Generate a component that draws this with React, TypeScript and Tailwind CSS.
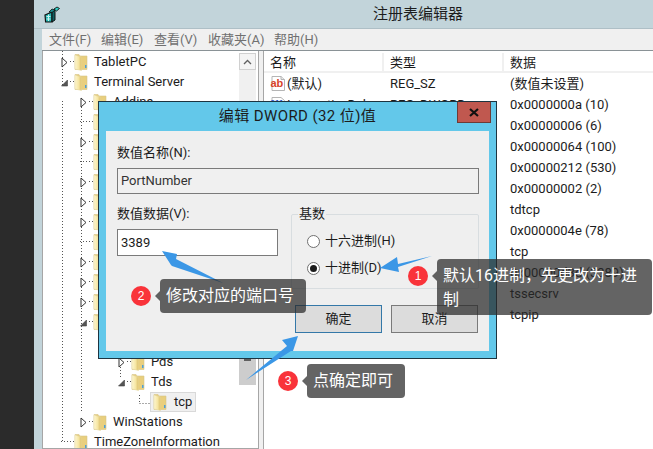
const ui = "font-['Roboto','Noto_Sans_CJK_SC',sans-serif]";

const treeRows: { label: string; x: number; arrow?: "open" | "closed"; selected?: boolean }[] = [
  { label: "TabletPC", x: 61, arrow: "closed" },
  { label: "Terminal Server", x: 61, arrow: "open" },
  { label: "Addins", x: 80, arrow: "closed" },
  { label: "ConnectionHandler", x: 80 },
  { label: "DefaultUserConfiguration", x: 80, arrow: "closed" },
  { label: "Dwm", x: 80 },
  { label: "KeyboardType Mapping", x: 80, arrow: "closed" },
  { label: "RCM", x: 80, arrow: "closed" },
  { label: "SessionArbitrationHelper", x: 80, arrow: "closed" },
  { label: "SysProcs", x: 80 },
  { label: "TerminalTypes", x: 80, arrow: "closed" },
  { label: "Utilities", x: 80, arrow: "closed" },
  { label: "VIDEO", x: 80, arrow: "closed" },
  { label: "Wds", x: 80, arrow: "open" },
  { label: "rdpwd", x: 99, arrow: "open" },
  { label: "Pds", x: 118, arrow: "closed" },
  { label: "Tds", x: 118, arrow: "open" },
  { label: "tcp", x: 137, selected: true },
  { label: "WinStations", x: 80, arrow: "closed" },
  { label: "TimeZoneInformation", x: 61 },
];

const values: [string, string, string][] = [
  ["(默认)", "REG_SZ", "(数值未设置)"],
  ["InteractiveDelay", "REG_DWORD", "0x0000000a (10)"],
  ["LanAdapter", "REG_DWORD", "0x00000006 (6)"],
  ["MaxInstanceCount", "REG_DWORD", "0x00000064 (100)"],
  ["OutBufLength", "REG_DWORD", "0x00000212 (530)"],
  ["OutBufCount", "REG_DWORD", "0x00000002 (2)"],
  ["PdClass", "REG_SZ", "tdtcp"],
  ["PdFlag", "REG_DWORD", "0x0000004e (78)"],
  ["PdName", "REG_SZ", "tcp"],
  ["PortNumber", "REG_DWORD", "0x00000d3d (3389)"],
  ["ServiceName", "REG_SZ", "tssecsrv"],
  ["Transport", "REG_SZ", "tcpip"],
];

function FolderIcon() {
  return (
    <svg width="14" height="18" viewBox="0 0 14 18" className="shrink-0">
      <defs>
        <linearGradient id="folderFill" x1="0" x2="1" y1="0" y2="0">
          <stop offset="0" stopColor="#fdf6cf" />
          <stop offset="0.55" stopColor="#f6e6a4" />
          <stop offset="1" stopColor="#dcc06a" />
        </linearGradient>
      </defs>
      <path d="M1 1.5h4l1 1.5h7v13.5H1z" fill="#e6cd7c" stroke="#d8c68c" strokeWidth="0.6" />
      <path d="M1 2l6.5 2.2v13.3L1 16z" fill="url(#folderFill)" stroke="#e4d9a6" strokeWidth="0.5" />
      <path d="M7.5 4.2h4.5v12H7.5z" fill="#e9cf7e" />
      <rect x="11" y="12" width="1.5" height="3" fill="#4f9fd8" />
    </svg>
  );
}

function AppIcon() {
  return (
    <svg width="18" height="18" viewBox="0 0 18 18" className="shrink-0">
      <path d="M2 9l7-3v10H2.6z" fill="#25b7b4" stroke="#111" strokeWidth="1.2" />
      <path d="M3.5 10.5h4M3.5 13h4M5.5 8.5v6.5" stroke="#c8f4ee" strokeWidth="1" />
      <path d="M9 6l3-2v10l-3 2z" fill="#0f5f62" stroke="#111" strokeWidth="1" />
      <path d="M6 6l3-3 3 1-3 2.5z" fill="#1a8f90" stroke="#111" strokeWidth="0.8" />
      <path d="M11 3l3-2 2.5 1.5-3 2.5z" fill="#2ed0c6" stroke="#111" strokeWidth="0.9" />
    </svg>
  );
}

function AbIcon() {
  return (
    <svg width="16" height="17" viewBox="0 0 16 17" className="shrink-0">
      <path d="M2 1.5h9l3.5 3v11H2z" fill="#fff" stroke="#b5b5b5" />
      <path d="M11 1.5v3h3.5" fill="#e8e8e8" stroke="#b5b5b5" />
      <text x="0.5" y="11.5" fontSize="11" fontWeight="700" fill="#d8432a" fontFamily="Liberation Sans, sans-serif">
        ab
      </text>
    </svg>
  );
}

function BinIcon() {
  return (
    <svg width="16" height="17" viewBox="0 0 16 17" className="shrink-0">
      <path d="M2 1.5h9l3.5 3v11H2z" fill="#fff" stroke="#b5b5b5" />
      <text x="0.5" y="9" fontSize="8" fontWeight="700" fill="#2f56c8" fontFamily="Liberation Sans, sans-serif">
        011
      </text>
    </svg>
  );
}

function TreeArrow({ kind }: { kind: "open" | "closed" }) {
  return kind === "open" ? (
    <svg width="7" height="9" viewBox="0 0 7 9">
      <path d="M6.5 2v6H.5z" fill="#555" stroke="#444" strokeWidth="0.6" />
    </svg>
  ) : (
    <svg width="7" height="11" viewBox="0 0 7 11">
      <path d="M1 1l5 4.5L1 10z" fill="#fff" stroke="#333" />
    </svg>
  );
}

// dotted connector lines of the tree, coordinates relative to the tree panel
function TreeGuides() {
  const dots = "1 2";
  const v: [number, number, number][] = [
    [19, 0, 36],
    [19, 50, 392],
    [38, 50, 362],
    [77, 316, 326],
    [96, 344, 352],
  ];
  const h: [number, number, number][] = [];
  treeRows.forEach((r, i) => {
    if (r.selected) return;
    h.push([r.x - 42 + (r.arrow ? 8 : -1), r.x - 42 + 12, 10 + i * 20]);
  });
  return (
    <svg width="216" height="400" className="absolute left-0 top-0" fill="none" stroke="#555" strokeDasharray={dots}>
      {v.map(([x, a, b], i) => (
        <line key={i} x1={x + 0.5} x2={x + 0.5} y1={a} y2={b} />
      ))}
      {h.map(([a, b, y], i) => (
        <line key={i} x1={a} x2={b} y1={y + 0.5} y2={y + 0.5} />
      ))}
      <line x1="96.5" x2="107" y1="352.5" y2="352.5" />
    </svg>
  );
}

function TreeRow({ label, x, arrow, selected }: (typeof treeRows)[number]) {
  return (
    <div className="relative flex h-5 items-center whitespace-nowrap" style={{ paddingLeft: x - 43 }}>
      <span className="flex w-[13px] shrink-0 items-center">{arrow ? <TreeArrow kind={arrow} /> : null}</span>
      {selected ? (
        <span className="flex h-5 items-center gap-[7px] border border-[#d9d9d9] bg-[#f0f0f0] pl-[2px] pr-[3px]">
          <FolderIcon />
          {label}
        </span>
      ) : (
        <span className="flex items-center gap-[6px]">
          <FolderIcon />
          {label}
        </span>
      )}
    </div>
  );
}

function Tree() {
  return (
    <div className="relative h-full w-[217px] shrink-0 overflow-hidden border border-t-0 border-[#a6a6a6] bg-white pt-[1px] text-[13px] text-[#1c1c1c]">
      <TreeGuides />
      {treeRows.map((r) => (
        <TreeRow key={r.label} {...r} />
      ))}
      <div className="absolute right-[2px] top-[2px] flex h-[400px] w-[17px] flex-col bg-[#f0f0f0]">
        <div className="flex h-[17px] items-center justify-center border border-[#d0d0d0] bg-[#f4f4f4]">
          <svg width="9" height="6" viewBox="0 0 9 6" fill="none" stroke="#606060" strokeWidth="1.3">
            <path d="M1 5l3.5-3.5L8 5" />
          </svg>
        </div>
        <div className="flex-1" />
        <div className="flex h-[130px] flex-col items-center bg-[#cdcdcd] pb-[24px]">
          <div className="flex-1" />
          <div className="h-[3px] w-[7px] bg-[#606060]" />
        </div>
        <div className="h-[68px] bg-white" />
      </div>
    </div>
  );
}

function ValueList() {
  return (
    <div className="h-full flex-1 overflow-hidden border-l border-t-0 border-[#a6a6a6] bg-white pt-[2px] text-[13px] text-[#1c1c1c]">
      <div className="grid h-5 grid-cols-[120px_120px_1fr] items-center border-b-2 border-[#f0f0f0]">
        <div className="h-full border-r-2 border-[#f0f0f0] pl-[6px]">名称</div>
        <div className="h-full border-r-2 border-[#f0f0f0] pl-[6px]">类型</div>
        <div className="h-full pl-[6px]">数据</div>
      </div>
      {values.map(([name, type, data], i) => (
        <div key={name} className="grid h-[21px] grid-cols-[120px_120px_1fr] items-center whitespace-nowrap">
          <div className="flex items-center gap-[1px] pl-[6px]">
            {i === 0 || type === "REG_SZ" ? <AbIcon /> : <BinIcon />}
            {name}
          </div>
          <div className="pl-[6px]">{type}</div>
          <div className="pl-[6px]">{data}</div>
        </div>
      ))}
    </div>
  );
}

function Radio({ label, checked }: { label: string; checked?: boolean }) {
  return (
    <label className="flex h-5 items-center gap-[5px]">
      <span className="flex h-[13px] w-[13px] items-center justify-center rounded-full border border-[#707070] bg-white">
        {checked ? <span className="h-[7px] w-[7px] rounded-full bg-[#1a1a1a]" /> : null}
      </span>
      {label}
    </label>
  );
}

function EditDialog() {
  return (
    <div className="absolute left-[98px] top-[101px] flex h-[258px] w-[399px] flex-col border border-[#1d3440] bg-[#63c8ea] text-[13px] text-[#1c1c1c]">
      <div className="relative flex h-[29px] shrink-0 items-center justify-center text-[15px] tracking-[0.4px]">
        编辑 DWORD (32 位)值
        <div className="absolute right-[5px] top-0 flex h-[21px] w-[34px] items-center justify-center border border-t-0 border-[#6e3a35] bg-[#c0584f]">
          <svg width="10" height="9" viewBox="0 0 10 9" stroke="#111" strokeWidth="2.2">
            <path d="M1 1l8 7M9 1L1 8" />
          </svg>
        </div>
      </div>
      <div className="mx-[7px] mb-[7px] flex-1 bg-[#efefef] pl-[11px] pr-[10px] pt-[14px]">
        <div className="h-4 leading-4">数值名称(N):</div>
        <div className="mt-[7px] flex h-[26px] items-center border border-[#7a7a7a] bg-[#f0f0f0] pl-[3px] text-[#333]">
          PortNumber
        </div>
        <div className="mt-[12px] flex gap-[13px]">
          <div className="w-[161px]">
            <div className="h-4 leading-4">数值数据(V):</div>
            <div className="mt-[7px] flex h-[27px] items-center border border-[#7a7a7a] bg-white pl-[3px]">3389</div>
          </div>
          <fieldset className="h-[83px] flex-1 rounded-[2px] border border-[#d8dde0]">
            <legend className="ml-[6px] h-4 px-[1px] leading-4">基数</legend>
            <div className="mt-[9px] flex flex-col gap-[7px] pl-[15px]">
              <Radio label="十六进制(H)" />
              <Radio label="十进制(D)" checked />
            </div>
          </fieldset>
        </div>
        <div className="mt-[16px] flex justify-end gap-[9px] pr-[1px]">
          <button className="h-[28px] w-[87px] border border-[#3478a8] bg-[#dcdcdc]">确定</button>
          <button className="h-[28px] w-[87px] border border-[#7a7a7a] bg-[#dcdcdc]">取消</button>
        </div>
      </div>
    </div>
  );
}

function Callout({ n, text, className, bubble }: { n: number; text: string; className: string; bubble: string }) {
  return (
    <div className={`absolute flex items-start gap-[9px] ${className}`}>
      <span className="mt-[7px] flex h-5 w-5 shrink-0 items-center justify-center rounded-full bg-[#f9333a] font-['Liberation_Sans',sans-serif] text-[12px] text-white">
        {n}
      </span>
      <div className={`relative rounded-[4px] bg-[rgba(40,40,40,0.72)] px-[6px] pt-[5px] text-[16px] leading-[24px] text-white ${bubble}`}>
        <span className="absolute left-[-5px] top-[12px] h-0 w-0 border-y-[5px] border-r-[5px] border-y-transparent border-r-[rgba(40,40,40,0.72)]" />
        {text}
      </div>
    </div>
  );
}

function Arrows() {
  return (
    <svg width="653" height="449" className="pointer-events-none absolute left-0 top-0" fill="#3b97e6">
      <path d="M432 256L398 264L397 257L380 268L399 272L398 267z" />
      <path d="M162 251L177 254L176 259L223 283L172 266L171 265z" />
      <path d="M298 336L282 340L287 346L246 380L291 351L293 351z" />
    </svg>
  );
}

export default function App() {
  return (
    <div className={`relative h-[449px] w-[653px] overflow-hidden bg-[#2b2b2b] ${ui}`}>
      <div className="ml-[34px] flex h-full w-[768px] flex-col bg-[#c2d4da] px-[8px]">
        <div className="relative -mx-[8px] flex h-[29px] shrink-0 items-center justify-center border-b border-[#aebfc6] text-[15px] text-[#1c1c1c]">
          <span className="absolute left-[9px] top-[6px]">
            <AppIcon />
          </span>
          注册表编辑器
        </div>
        <div className="flex h-[21px] shrink-0 items-center bg-[#f0f0f0] pl-[7px] text-[13px] text-[#707070]">
          <span className="w-[52px]">文件(F)</span>
          <span className="w-[53px]">编辑(E)</span>
          <span className="w-[54px]">查看(V)</span>
          <span className="w-[66px]">收藏夹(A)</span>
          <span>帮助(H)</span>
        </div>
        <div className="flex min-h-0 flex-1 gap-[4px] border-t border-[#8a9296] bg-[#f0f0f0]">
          <Tree />
          <ValueList />
        </div>
      </div>
      <EditDialog />
      <Arrows />
      <Callout n={2} text="修改对应的端口号" className="left-[131px] top-[279px]" bubble="h-[34px] w-[146px]" />
      <Callout n={3} text="点确定即可" className="left-[278px] top-[364px]" bubble="h-[34px] w-[98px]" />
      <Callout n={1} text="默认16进制，先更改为十进制" className="left-[408px] top-[259px]" bubble="h-[56px] w-[215px]" />
    </div>
  );
}
